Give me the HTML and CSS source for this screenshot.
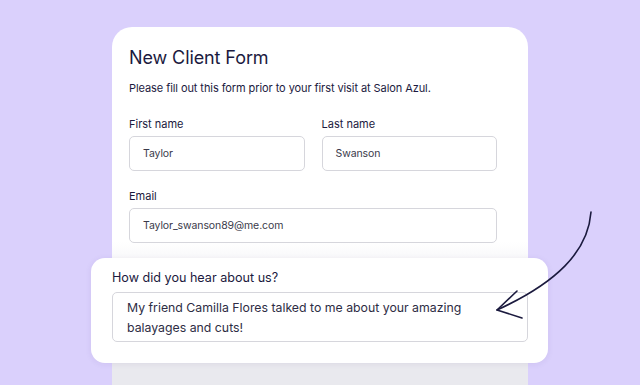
FILE: index.html
```html
<!DOCTYPE html>
<html lang="en">

<head>
    <meta charset="UTF-8" />
    <meta name="viewport" content="width=device-width, initial-scale=1.0" />
    <title>New Client Form</title>
    <link rel="stylesheet" href="styles.css">
</head>

<body>
    <div class="stage">
        <div class="client-card">
            <h1>New Client Form</h1>
            <p class="intro">Please fill out this form prior to your first visit at Salon Azul.</p>

            <div class="row">
                <div class="field">
                    <label>First name</label>
                    <div class="input">Taylor</div>
                </div>
                <div class="field">
                    <label>Last name</label>
                    <div class="input">Swanson</div>
                </div>
            </div>

            <div class="field">
                <label>Email</label>
                <div class="input">Taylor_swanson89@me.com</div>
            </div>
        </div>

        <div class="callout">
            <label>How did you hear about us?</label>
            <div class="textarea">My friend Camilla Flores talked to me about your amazing balayages and cuts!</div>
        </div>

        <svg class="arrow" width="640" height="385" viewBox="0 0 640 385" fill="none" stroke="#1b1a3e"
            stroke-width="1.6" stroke-linecap="round" stroke-linejoin="round">
            <path d="M591 212 C 588 252, 556 283, 497 310" />
            <path d="M517 291 L497 310 L522 318" />
        </svg>
    </div>
</body>

</html>
```

FILE: styles.css
```css
* {
    margin: 0;
    padding: 0;
    box-sizing: border-box;
    font-family: 'Inter', 'Noto Sans', sans-serif;
}

body {
    background: #dad0fc;
    color: #1b1a3e;
    width: 640px;
    height: 385px;
    overflow: hidden;
}

.stage {
    position: relative;
    width: 640px;
    height: 385px;
    padding-top: 27px;
}

.client-card {
    margin-left: 112px;
    width: 416px;
    height: 358px;
    padding: 19px 31px 0 17px;
    border-radius: 20px 20px 0 0;
    background: linear-gradient(to bottom, #ffffff 0, #ffffff 215px, #f3f3f6 245px, #e9e9ee 330px);
}

.client-card h1 {
    font-size: 18px;
    font-weight: 400;
    line-height: 24px;
    letter-spacing: -0.1px;
}

.intro {
    font-size: 11px;
    line-height: 16px;
    letter-spacing: -0.08px;
    margin-top: 10px;
    margin-bottom: 20px;
}

.row {
    display: flex;
    gap: 17px;
    margin-bottom: 17px;
}

.row .field {
    flex: 1;
}

.field label {
    display: block;
    font-size: 11px;
    line-height: 16px;
    margin-bottom: 4px;
}

.input {
    height: 35px;
    border: 1px solid #d6d6dc;
    border-radius: 5px;
    padding-left: 13px;
    font-size: 10.5px;
    letter-spacing: -0.1px;
    line-height: 33px;
    color: #3a3a4a;
}

.callout {
    position: absolute;
    left: 91px;
    top: 258px;
    width: 457px;
    height: 105px;
    background: #ffffff;
    border-radius: 14px;
    padding: 11px 20px 0 21px;
    box-shadow: 0 1px 6px rgba(60, 40, 120, 0.08);
}

.callout label {
    display: block;
    font-size: 12.6px;
    line-height: 18px;
    margin-bottom: 5px;
}

.textarea {
    height: 50px;
    border: 1px solid #d6d6dc;
    border-radius: 5px;
    padding: 5px 40px 0 14px;
    font-size: 12.3px;
    line-height: 20px;
    color: #2e2d44;
}

.arrow {
    position: absolute;
    left: 0;
    top: 0;
}
```
